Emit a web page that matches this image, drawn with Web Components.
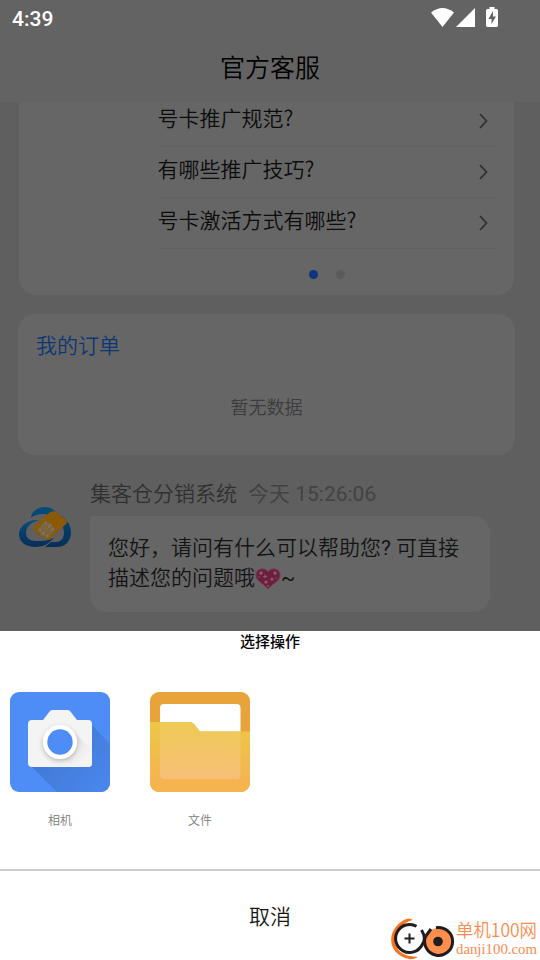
<!DOCTYPE html>
<html lang="zh-CN"><head><meta charset="utf-8"><title>官方客服</title>
<style>
html,body{margin:0;height:100%;overflow:hidden;background:#5f5f5f}
body{font-family:Roboto,"Noto Sans CJK SC",sans-serif}
</style></head><body><support-page></support-page>
<script>
function define(name, markup){
  const t=document.createElement('template');
  t.innerHTML=markup;
  customElements.define(name, class extends HTMLElement{
    constructor(){super();this.attachShadow({mode:'open'}).append(t.content.cloneNode(true));}
  });
}
define('status-bar',`<style>
:host{display:flex;height:37px;box-sizing:border-box;padding:0 42px 0 12px;justify-content:space-between;color:#fff}
span{font:500 21px/38px Roboto,sans-serif}svg{display:block}
</style><span>4:39</span><svg width="68" height="36" viewBox="430 0 68 36" fill="#fff">
<path d="M431 12.5Q442.500 3.500 454 12.500L442.500 27Z"/><path d="M475 8V27H456Z"/>
<path fill-rule="evenodd" d="M489.500 9V7H494.500V9H496.500Q498 9 498 10.500V25.500Q498 27 496.500 27H487.500Q486 27 486 25.500V10.500Q486 9 487.500 9ZM493 11L488.500 19H491.500V24L496 16.500H493Z"/></svg>`);
define('nav-title',`<style>:host{display:block;height:65px;text-align:center;color:#000;font-size:25px;line-height:64px;font-weight:350}</style><slot></slot>`);
define('faq-row',`<style>
:host{display:flex;height:51px;box-sizing:border-box;border-bottom:1px solid #606060;align-items:center;justify-content:space-between;color:#0c0c0c;font-size:21px;font-weight:350;font-family:"Noto Sans CJK SC",sans-serif}
span{line-height:42px;padding-bottom:8px;margin-left:-.5px}svg{margin:0 6px 1px 0}
</style><span><slot></slot></span><svg width="11" height="18" viewBox="0 0 11 18" fill="none" stroke="#303030" stroke-width="1.8"><path d="M2 2L8.500 9L2 16"/></svg>`);
define('faq-card',`<style>
:host{display:block;height:193px;margin:0 26px 0 19px;box-sizing:border-box;padding:0 19px 0 139px;background:#666;border-radius:0 0 17px 17px;overflow:hidden}
.rows{margin-top:-6px}.dots{display:flex;gap:18px;margin:21px 0 0 151px}
i{width:9px;height:9px;border-radius:50%;background:#5b5b5b}i:first-child{background:#0e357d}
</style><div class="rows"><slot></slot></div><div class="dots"><i></i><i></i></div>`);
define('order-card',`<style>
:host{display:block;height:141px;margin:19px 25px 0 18px;box-sizing:border-box;background:#666;border-radius:17px;font-weight:350}
.t{padding:17px 18px 0;font-size:21px;line-height:30px;color:#0e3674}
.e{text-align:center;font-size:18px;line-height:26px;margin-top:34px;color:#3c3c3c}
</style><div class="t"><slot name="title"></slot></div><div class="e"><slot></slot></div>`);
define('brand-logo',`<style>:host{display:block}svg{display:block}</style>
<svg width="54" height="44" viewBox="0 0 54 44"><defs><linearGradient id="b" x2="0" y2="1"><stop stop-color="#064d79"/><stop offset="1" stop-color="#082d57"/></linearGradient></defs>
<path fill="url(#b)" d="M13 14C14 6 21 3 27 3C33 3 37 6 39 10C47 13 53 20 53 28C53 37 47 43 39 43H27L33 38H38C43 38 46 34 46 29C46 22 42 18 36 17C34 12 30 10 25 10C20 10 16 11 13 14Z"/>
<path fill="url(#b)" d="M21 16C10 15 1 22 1 30C1 38 8 43 17 43C27 43 31 39 36 34C29 37 24 37 18 37C12 37 8 34 8 29C8 23 13 18 21 16Z"/>
<path fill="#8a5a08" d="M31 9Q34 6 38 8L48 16Q50 18 48 20L32 35Q29 37 26 34L16 27Q14 25 16 22Z"/>
<g transform="translate(28.500 25.500) rotate(40)" fill="#737068"><rect x="-6.500" y="-6" width="3.800" height="3.800" rx="1.300"/><rect x="-1.900" y="-7" width="3.800" height="4.800" rx="1.300"/><rect x="2.700" y="-6" width="3.800" height="3.800" rx="1.300"/><rect x="-7" y="-1.500" width="14" height="1.200"/><rect x="-7" y=".5" width="14" height="1.200"/><rect x="-6.500" y="2.500" width="3.800" height="3.800" rx="1.300"/><rect x="-1.900" y="2.500" width="3.800" height="4.600" rx="1.300"/><rect x="2.700" y="2.500" width="3.800" height="3.800" rx="1.300"/></g></svg>`);
define('heart-icon',`<style>:host{display:inline-block;width:26px;height:22px;vertical-align:-5px}svg{display:block}</style>
<svg width="26" height="22" viewBox="0 0 26 22"><path fill="#6c1e3b" stroke="#7a3450" d="M13 21C8 15 1 13 1 7C1 0 10-1 13 4C16-1 25 0 25 7C25 13 18 15 13 21Z"/><g fill="#86606f"><circle cx="6" cy="5" r="1.700"/><circle cx="20" cy="5" r="1.700"/><circle cx="11" cy="14" r="1.600"/><circle cx="4" cy="9" r=".7"/><circle cx="13" cy="18" r=".9"/><circle cx="21" cy="10" r=".7"/><path d="M10 6l.7 1.800 1.800.7-1.800.7-.7 1.800-.7-1.800-1.800-.7 1.800-.7zM17 9l.7 1.500 1.500.7-1.500.7-.7 1.500-.7-1.500-1.500-.7 1.500-.7z"/></g></svg>`);
define('chat-message',`<style>
:host{display:flex;padding:23px 50px 0 18px;gap:18px}brand-logo{margin-top:26px}
.c{width:400px}.m{display:flex;gap:11px;font-size:21px;line-height:32px;height:38px;color:#303030;font-weight:350}.m slot[name=time]{color:#434343;display:block;font-weight:400}
.b{height:96px;box-sizing:border-box;background:#666;border-radius:4px 17px 17px 17px;padding:17px 18px;color:#141414;font-size:21px;line-height:30px;font-weight:350;white-space:nowrap}
</style><brand-logo></brand-logo><div class="c"><div class="m"><slot name="name"></slot><slot name="time"></slot></div><div class="b"><slot></slot></div></div>`);
define('camera-icon',`<style>:host{display:block}svg{display:block}</style>
<svg width="100" height="100"><defs><linearGradient id="s" x1=".2" y1=".4" x2=".9" y2=".9"><stop stop-color="#4279d5"/><stop offset="1" stop-color="#4986ea"/></linearGradient><clipPath id="c"><rect width="100" height="100" rx="9"/></clipPath><filter id="f" x="-30%" y="-30%" width="160%" height="160%"><feDropShadow dx="0" dy="2" stdDeviation="2.500" flood-opacity=".25"/></filter>
<linearGradient id="w" gradientUnits="userSpaceOnUse" x1="60" y1="45" x2="78" y2="65"><stop stop-color="#e2e2e2"/><stop offset="1" stop-color="#f4f4f4"/></linearGradient></defs>
<g clip-path="url(#c)"><rect width="100" height="100" fill="#4d8df5"/><path fill="url(#s)" d="M20 73L47 100H100V52L81 32Z"/>
<path fill="#f4f4f4" d="M22 28H33L40 19Q41 18 43 18H57Q59 18 60 19L67 28H78Q82 28 82 32V71Q82 75 78 75H22Q18 75 18 71V32Q18 28 22 28Z"/><path fill="url(#w)" d="M62 38L82 58V71Q82 75 78 75H65L50 65Z"/>
<circle cx="50" cy="50" r="17" fill="#fff" filter="url(#f)"/><circle cx="50" cy="50" r="12.700" fill="#4d8df5"/></g></svg>`);
define('folder-icon',`<style>:host{display:block}svg{display:block}</style>
<svg width="100" height="100"><defs><linearGradient id="g" x2="0" y2="1"><stop stop-color="#edc746"/><stop offset=".85" stop-color="#f5b450"/></linearGradient><linearGradient id="h" x2="0" y2="1"><stop stop-color="#efca55"/><stop offset="1" stop-color="#f6c078"/></linearGradient><clipPath id="r"><rect width="100" height="100" rx="9"/></clipPath></defs>
<g clip-path="url(#r)"><rect width="100" height="100" fill="#e8a43a"/><rect x="10" y="12" width="80.500" height="75" rx="4" fill="#fff"/><path fill="url(#g)" d="M0 30H39Q42 30 44 32L50 39.500H100V100H0Z"/><path fill="url(#h)" d="M10 30H39Q42 30 44 32L50 39.500H90.500V83Q90.500 87 86.500 87H14Q10 87 10 83Z"/></g></svg>`);
define('action-item',`<style>:host{display:block;width:100px;text-align:center;color:#7c7c7c;font-size:12px;line-height:18px;font-weight:350}.l{margin-top:20px}</style><slot name="icon"></slot><div class="l"><slot></slot></div>`);
define('action-sheet',`<style>
:host{display:block;background:#fff;height:329px}
.t{height:61px;text-align:center;font-size:15px;line-height:22px;font-weight:500;color:#000}
.g{display:flex;gap:40px;padding-left:10px;height:177px}.c{border-top:2px solid #ccc;text-align:center;font-size:21px;line-height:93px;height:89px;color:#161616;font-weight:350}
</style><div class="t"><slot name="title"></slot></div><div class="g"><slot></slot></div><div class="c"><slot name="cancel"></slot></div>`);
define('site-mark',`<style>:host{position:absolute;right:0;bottom:0;display:block}svg{display:block}text{font-family:"Noto Sans CJK SC",sans-serif;font-weight:350;fill:#fc8c4e}.d{font-family:"Liberation Serif",serif}</style>
<svg width="150" height="46" viewBox="390 914 150 46" fill="none"><path d="M413 920Q409 917 404 920C388 929 387 948 401 956Q410 962 418 957L409 956C388 951 392 925 413 920Z" fill="#fa7420"/>
<path d="M416.500 926.300A14 14 0 1 0 422 945Q427 939 421.500 930" stroke="#211c20" stroke-width="3"/><path d="M404.500 938.500H414.500M409.500 933.500V943.500" stroke="#211c20" stroke-width="2"/>
<circle cx="438.500" cy="941.500" r="13.500" fill="#ff8e4c"/><path d="M436 927.700A14 14 0 1 1 425.500 936.500L431 929" stroke="#211c20" stroke-width="3"/><circle cx="438" cy="941.500" r="4.800" fill="#211c20"/>
<text x="456" y="937" font-size="18" textLength="81" lengthAdjust="spacingAndGlyphs">单机100网</text><text class="d" x="456" y="954" font-size="14" textLength="81" lengthAdjust="spacingAndGlyphs">danji100.com</text></svg>`);
define('support-page',`<style>
:host{display:block;position:relative;width:540px;height:960px;overflow:hidden;background:#5f5f5f}
header{height:102px;background:#636363}main{height:529px;overflow:hidden}b{font-weight:400}
</style><header><status-bar></status-bar><nav-title>官方客服</nav-title></header>
<main><faq-card><faq-row>号卡推广规范?</faq-row><faq-row>有哪些推广技巧?</faq-row><faq-row>号卡激活方式有哪些?</faq-row></faq-card>
<order-card><span slot="title">我的订单</span>暂无数据</order-card>
<chat-message><span slot="name">集客仓分销系统</span><span slot="time">今天 15:26:06</span><div>您好，请问有什么可以帮助您<b>?</b> 可直接</div><div>描述您的问题哦<heart-icon></heart-icon><b>~</b></div></chat-message></main>
<action-sheet><span slot="title">选择操作</span><action-item><camera-icon slot="icon"></camera-icon>相机</action-item><action-item><folder-icon slot="icon"></folder-icon>文件</action-item><span slot="cancel">取消</span></action-sheet><site-mark></site-mark>`);
</script></body></html>
